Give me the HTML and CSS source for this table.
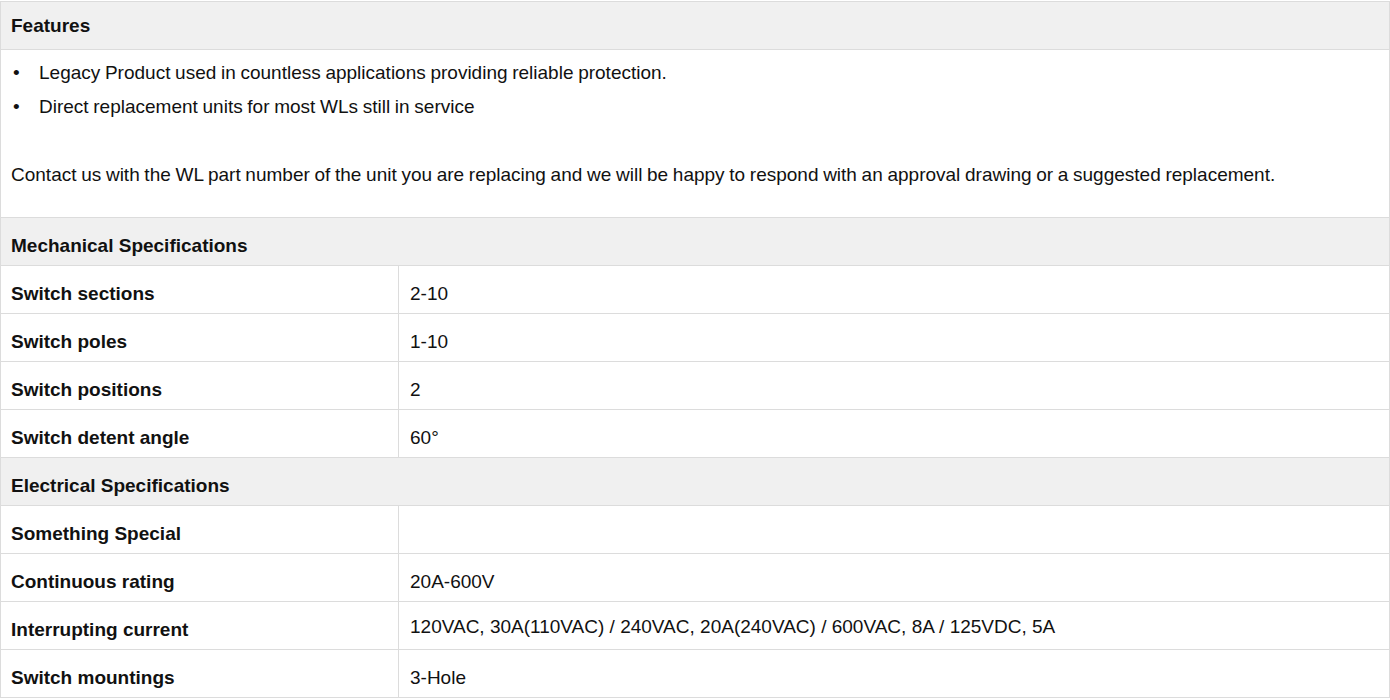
FILE: index.html
```html
<!DOCTYPE html>
<html>
<head>
<meta charset="utf-8">
<link rel="stylesheet" href="styles.css">
</head>
<body>
<div class="wrap">
<table class="spec">
  <colgroup><col class="c1"><col class="c2"></colgroup>
  <tr class="head first"><th colspan="2">Features</th></tr>
  <tr>
    <td colspan="2" class="features">
      <ul class="bullets">
        <li><span class="dot">•</span><span>Legacy Product used in countless applications providing reliable protection.</span></li>
        <li><span class="dot">•</span><span>Direct replacement units for most WLs still in service</span></li>
      </ul>
      <p class="contact">Contact us with the WL part number of the unit you are replacing and we will be happy to respond with an approval drawing or a suggested replacement.</p>
    </td>
  </tr>
  <tr class="head"><th colspan="2">Mechanical Specifications</th></tr>
  <tr><th>Switch sections</th><td>2-10</td></tr>
  <tr><th>Switch poles</th><td>1-10</td></tr>
  <tr><th>Switch positions</th><td>2</td></tr>
  <tr><th>Switch detent angle</th><td>60°</td></tr>
  <tr class="head"><th colspan="2">Electrical Specifications</th></tr>
  <tr><th>Something Special</th><td></td></tr>
  <tr><th>Continuous rating</th><td>20A-600V</td></tr>
  <tr><th>Interrupting current</th><td class="up">120VAC, 30A(110VAC) / 240VAC, 20A(240VAC) / 600VAC, 8A / 125VDC, 5A</td></tr>
  <tr><th>Switch mountings</th><td>3-Hole</td></tr>
</table>
</div>
</body>
</html>
```

FILE: styles.css
```css
html, body {
  margin: 0;
  padding: 0;
  background: #ffffff;
}
.wrap {
  padding-top: 1px;
}
.spec {
  width: 1390px;
  border-collapse: collapse;
  table-layout: fixed;
  font-family: "Liberation Sans", Arial, sans-serif;
  font-size: 19px;
  color: #111;
}
.c1 { width: 398px; }
.spec th, .spec td {
  box-sizing: border-box;
  border: 1px solid #dcdcdc;
  height: 48px;
  padding: 0 11px;
  text-align: left;
  vertical-align: top;
  line-height: 22px;
}
.spec th {
  font-weight: bold;
  padding: 17px 10px 0;
}
.spec td {
  padding-top: 17px;
}
.head th {
  background: #f0f0f0;
}
.head.first th {
  padding-top: 13px;
}
.spec td.up {
  padding-top: 14px;
}
.spec td.features {
  padding: 6px 10px 25px;
  height: auto;
  line-height: 34px;
  word-spacing: -0.6px;
}
.bullets {
  list-style: none;
  margin: 0;
  padding: 0;
}
.bullets li {
  display: flex;
}
.dot {
  box-sizing: border-box;
  width: 28px;
  padding-left: 2px;
  flex: none;
}
.contact {
  margin: 34px 0 0;
}
```
